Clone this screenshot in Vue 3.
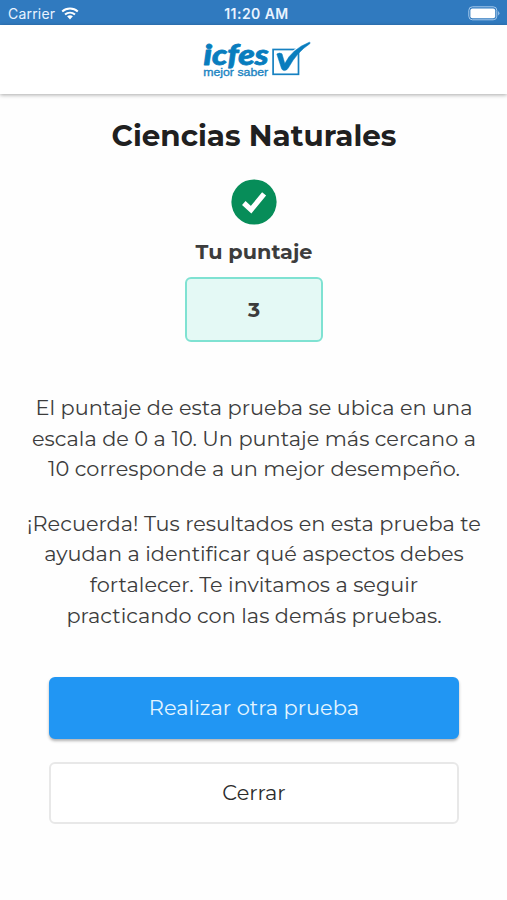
<script setup>
const scale = ['El puntaje de esta prueba se ubica en una', 'escala de 0 a 10. Un puntaje más cercano a', '10 corresponde a un mejor desempeño.']
const reminder = ['¡Recuerda! Tus resultados en esta prueba te', 'ayudan a identificar qué aspectos debes', 'fortalecer. Te invitamos a seguir', 'practicando con las demás pruebas.']
</script>

<template>
  <div class="screen">
    <div class="status">
      <div class="carrier">
        <span>Carrier</span>
        <svg class="wifi" width="18" height="13" viewBox="0 0 18 13">
          <path d="M1.2 4.6C5.6 .6 12.4 .6 16.8 4.6" />
          <path d="M4 7.6C6.9 5 11.1 5 14 7.6" />
          <path class="fill" d="M6.1 9.3Q9 7 11.9 9.3L9 12.4Z" />
        </svg>
      </div>
      <span class="clock">11:20 AM</span>
      <svg class="battery" width="32" height="15" viewBox="0 0 32 15">
        <rect class="case" x=".8" y=".8" width="28" height="13" rx="3.6" />
        <rect class="charge" x="2.4" y="2.4" width="24.8" height="9.8" rx="2" />
        <path class="tip" d="M30.2 5Q32.6 7.3 30.2 9.6Z" />
      </svg>
    </div>
    <header class="header">
      <svg class="logo" width="112" height="44" viewBox="0 0 112 44">
        <text class="brand" x="3.5" y="25.7" textLength="65" lengthAdjust="spacingAndGlyphs">icfes</text>
        <text class="tagline" x="3.2" y="36.7" textLength="65" lengthAdjust="spacingAndGlyphs">mejor saber</text>
        <rect class="box" x="73.1" y="10.5" width="25.4" height="24.8" />
        <path class="tick-gap" d="M91 17Q96 10 105 6" />
        <path class="tick" d="M76.8 15Q79.5 13.2 82 14.8L84.8 24.5Q92 10 109.3 3.2Q110.8 3.3 109.8 4.8Q97 13 88.3 29Q86.5 31.7 84.5 31.6Q82.5 31.8 81.5 29.5Z" />
      </svg>
    </header>
    <main class="content">
      <h1 class="title">Ciencias Naturales</h1>
      <svg class="badge" width="46" height="46" viewBox="0 0 46 46">
        <circle cx="23" cy="23" r="22.6" />
        <path d="M12.8 24L20.1 30.7L33.1 14.9" />
      </svg>
      <h2 class="label">Tu puntaje</h2>
      <div class="score">3</div>
      <p class="copy first"><span v-for="line in scale" :key="line">{{ line }}</span></p>
      <p class="copy second"><span v-for="line in reminder" :key="line">{{ line }}</span></p>
      <div class="actions">
        <button class="button primary">Realizar otra prueba</button>
        <button class="button">Cerrar</button>
      </div>
    </main>
  </div>
</template>

<style>
body { background: #fff; }
</style>

<style scoped>
.screen { height: 900px; overflow: hidden; background: #fefefe; font-family: Montserrat, Inter, sans-serif; color: #3c3c3c; }
.status { height: 25px; box-sizing: border-box; padding: 2px 7px 0 8px; display: grid; grid-template-columns: 1fr auto 1fr; align-items: center; background: #307abf; color: #e9f3ff; font: 14px/23px Inter, sans-serif; }
.carrier { display: flex; align-items: center; gap: 6px; letter-spacing: .2px; }
.clock { font-size: 14px; font-weight: 600; letter-spacing: .45px; padding-left: 5px; }
.wifi path { fill: none; stroke: #fff; stroke-width: 2; }
.wifi .fill { fill: #fff; stroke: none; }
.battery { justify-self: end; }
.case { fill: none; stroke: #a5c9ec; stroke-width: 1; }
.charge { fill: #fff; }
.tip { fill: #a5c9ec; }
.header { height: 69px; display: flex; justify-content: center; padding: 14px 0 0 5px; box-sizing: border-box; background: #fff; box-shadow: 0 1px 4px rgba(0, 0, 0, .34); }
.logo { overflow: visible; }
.brand { font: italic 900 29px Lato, sans-serif; fill: #087dbe; stroke: #087dbe; stroke-width: .8; stroke-linejoin: round; }
.tagline { font: 400 11.5px "Liberation Sans", sans-serif; fill: #1b84c2; stroke: #1b84c2; stroke-width: .35; }
.box { fill: none; stroke: #1681c1; stroke-width: 1.7; }
.tick-gap { fill: none; stroke: #fff; stroke-width: 4; }
.tick { fill: #087dbe; stroke: #087dbe; stroke-width: .5; }
.content { display: flex; flex-direction: column; align-items: center; padding-left: 1px; }
.title { margin: 22px 0 0; font-size: 29.4px; line-height: 40px; font-weight: 700; color: #202020; white-space: nowrap; }
.badge { margin-top: 23px; }
.badge circle { fill: #078d59; }
.badge path { fill: none; stroke: #fff; stroke-width: 5.2; }
.label { margin: 13px 0 0; font-size: 20.8px; line-height: 28px; font-weight: 700; }
.score { width: 138px; height: 65px; margin-top: 11px; box-sizing: border-box; border: 2px solid #7fe2d2; border-radius: 6px; background: #e4f9f5; display: grid; place-items: center; font-size: 20.5px; font-weight: 700; }
.copy { margin: 0; font-size: 20.85px; line-height: 30.6px; text-align: center; white-space: nowrap; color: #3c3c3c; font-weight: 400; }
.copy span { display: block; }
.first { margin-top: 51px; }
.second { margin-top: 24px; }
.actions { width: 410px; margin-top: 46px; display: flex; flex-direction: column; gap: 23px; }
.button { height: 62px; padding: 0 0 1px; border: 2px solid #e8e8e8; border-radius: 6px; background: #fff; color: #2c2c2c; font: 400 20.9px Montserrat, Inter, sans-serif; }
.primary { border-color: #2196f3; background: #2196f3; color: #e4f5ff; box-shadow: 0 2px 3px rgba(0, 0, 0, .3); }
</style>
